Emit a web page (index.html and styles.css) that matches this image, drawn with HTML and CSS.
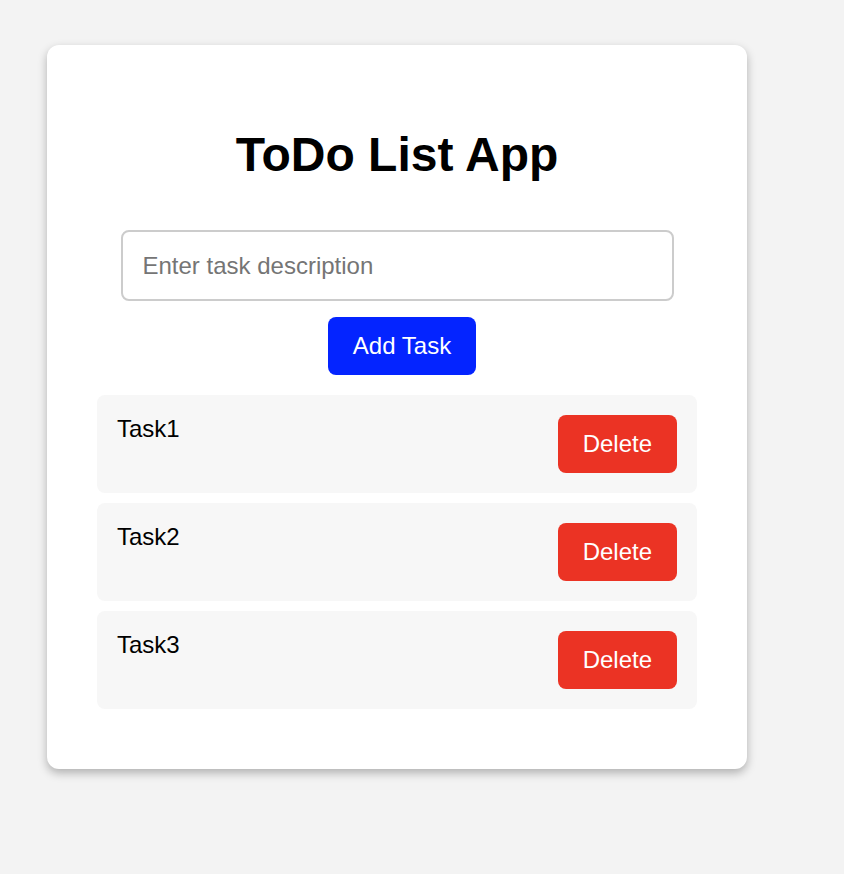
FILE: index.html
```html
<!DOCTYPE html>
<html lang="en">
<head>
<meta charset="utf-8">
<title>ToDo List App</title>
<link rel="stylesheet" href="styles.css">
</head>
<body>
  <div class="card">
    <h1 class="title">ToDo List App</h1>
    <div class="form">
      <input class="task-input" type="text" placeholder="Enter task description">
      <button class="add-btn" type="button">Add Task</button>
    </div>
    <ul class="task-list">
      <li class="task-item"><span class="task-text">Task1</span><button class="delete-btn" type="button">Delete</button></li>
      <li class="task-item"><span class="task-text">Task2</span><button class="delete-btn" type="button">Delete</button></li>
      <li class="task-item"><span class="task-text">Task3</span><button class="delete-btn" type="button">Delete</button></li>
    </ul>
  </div>
</body>
</html>
```
FILE: styles.css
```css
* { box-sizing: border-box; }

html, body {
  margin: 0;
  background: #f3f3f3;
  font-family: "Liberation Sans", Arial, Helvetica, sans-serif;
  font-size: 24px;
  color: #000;
}

body {
  padding: 45px 0 0 47px;
  min-height: 874px;
}

.card {
  width: 700px;
  background: #fff;
  border-radius: 12px;
  padding: 50px;
  box-shadow: 0 4px 10px rgba(0, 0, 0, 0.28);
}

.title {
  margin: 32px 0 0;
  font-size: 48px;
  font-weight: bold;
  text-align: center;
}

.form {
  display: flex;
  flex-direction: column;
  align-items: center;
  margin-top: 48px;
}

.task-input {
  width: 553px;
  height: 71px;
  padding: 0 20px;
  border: 2px solid #cccccc;
  border-radius: 8px;
  font-family: inherit;
  font-size: 24px;
  color: #000;
  outline: none;
}

.task-input::placeholder {
  color: #757575;
}

.add-btn,
.delete-btn {
  border: none;
  border-radius: 8px;
  color: #fff;
  font-family: inherit;
  font-size: 24px;
  line-height: 28px;
  padding: 15px 25px;
  cursor: pointer;
}

.add-btn {
  margin: 16px 0 0 10px;
  background: #0424ff;
}

.delete-btn {
  background: #eb3324;
}

.task-list {
  list-style: none;
  margin: 20px 0 0;
  padding: 0;
}

.task-item {
  display: flex;
  justify-content: space-between;
  align-items: flex-start;
  background: #f7f7f7;
  border-radius: 8px;
  padding: 20px;
  margin-bottom: 10px;
}

.task-text {
  line-height: 28px;
}
```
